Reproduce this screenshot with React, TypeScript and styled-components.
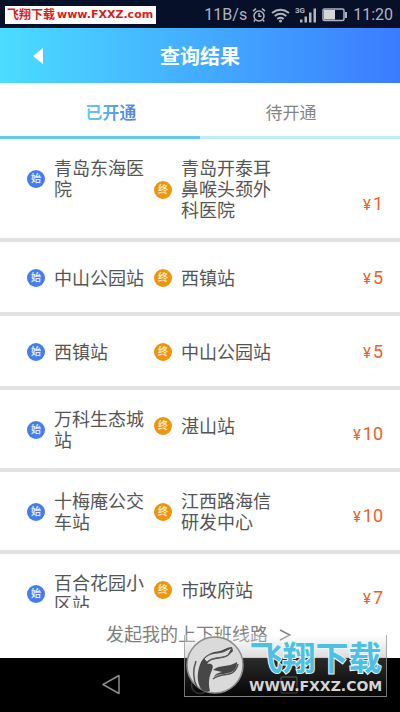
import React, { useState } from "react";
import styled, { createGlobalStyle } from "styled-components";

const sans = `Roboto, "Noto Sans CJK SC", sans-serif`;

const GlobalStyle = createGlobalStyle`
  * { box-sizing: border-box; }
  body { margin: 0; background: #fff; font-family: ${sans}; color: #555; }
  button { font: inherit; color: inherit; background: none; border: 0; padding: 0; cursor: pointer; }
`;

const Screen = styled.div`
  position: relative;
  display: flex;
  flex-direction: column;
  height: 100vh;
  overflow: hidden;
`;

const StatusBar = styled.div`
  display: flex;
  flex: none;
  align-items: center;
  justify-content: space-between;
  height: 28px;
  padding: 2px 7px 0 5px;
  background: #071029;
  color: #b0b4be;
  font-size: 16px;
  line-height: 20px;
`;

const SiteTag = styled.div`
  display: flex;
  align-items: center;
  gap: 2px;
  height: 18px;
  padding: 0 3px 0 2px;
  background: #fff;
  color: #dc1c1c;
  font-weight: 700;
  font-size: 12px;
  line-height: 18px;
  white-space: nowrap;
`;

const SiteTagUrl = styled.span`
  font-family: "DejaVu Sans", sans-serif;
  font-size: 11px;
`;

const StatusItems = styled.div`
  display: flex;
  align-items: center;
  gap: 5px;
`;

const Header = styled.header`
  display: grid;
  grid-template-columns: 76px 1fr 76px;
  flex: none;
  align-items: center;
  height: 55px;
  background: linear-gradient(90deg, #4bdcff, #3b7cff);
`;

const BackButton = styled.button`
  display: flex;
  justify-content: center;
`;

const Title = styled.h1`
  margin: 0;
  padding-top: 2px;
  color: #fff;
  font-size: 20px;
  font-weight: 700;
  line-height: 28px;
  text-align: center;
`;

const Tabs = styled.div`
  display: grid;
  grid-template-columns: 1fr 1fr;
  flex: none;
  height: 56px;
`;

const Tab = styled.button<{ $active: boolean }>`
  && { padding-top: 6px; }
  border-bottom: 3px solid ${(p) => (p.$active ? "#62cbe6" : "#bdedf5")};
  font-size: 17px;
  line-height: 24px;
  font-weight: ${(p) => (p.$active ? 700 : 400)};
  color: #858585;
  &:first-child { padding-left: 22px; }
  &:last-child { padding-right: 18px; }
`;

const TabLabel = styled.span<{ $active: boolean }>`
  ${(p) =>
    p.$active &&
    `background: linear-gradient(90deg, #66cdf0, #5580e2);
     background-clip: text;
     color: transparent;`}
`;

const RouteList = styled.ul`
  flex: 1;
  min-height: 0;
  margin: 0;
  padding: 0;
  overflow-y: auto;
  scrollbar-width: none;
  list-style: none;
`;

const RouteRow = styled.li`
  display: grid;
  grid-template-columns: 127px 1fr auto;
  padding: 19px 17px 17px 27px;
  border-bottom: 4px solid #e2e2e2;
`;

const Stop = styled.div`
  display: flex;
  align-items: center;
  align-self: start;
  gap: 9px;
  min-height: 34px;
`;

const StopBadge = styled.span<{ $kind: "start" | "end" }>`
  flex: none;
  width: 18px;
  height: 18px;
  border-radius: 50%;
  background: ${(p) => (p.$kind === "start" ? "#447df0" : "#ec960f")};
  color: ${(p) => (p.$kind === "start" ? "#dce8ff" : "#ffe7bd")};
  font-size: 10px;
  font-weight: 700;
  line-height: 18px;
  text-align: center;
`;

const StopName = styled.span`
  width: 90px;
  font-size: 18px;
  line-height: 21px;
`;

const Price = styled.div`
  display: flex;
  align-items: center;
  align-self: end;
  gap: 2px;
  height: 34px;
  color: #ee5f2a;
  font-size: 18px;
  line-height: 20px;
`;

const Currency = styled.span`
  padding-top: 2px;
  font-size: 15px;
`;

const CreateRoute = styled.button`
  && {
    display: flex;
    flex: none;
    align-items: center;
    justify-content: center;
    gap: 11px;
    height: 50px;
    padding: 4px 3px 0 0;
    background: #fff;
    color: #808080;
    font-size: 18px;
    line-height: 24px;
  }
`;

const NavBar = styled.nav`
  display: grid;
  grid-template-columns: repeat(3, 89px);
  flex: none;
  justify-content: center;
  align-items: center;
  height: 54px;
  background: #000;
`;

const NavButton = styled.button`
  display: flex;
  justify-content: center;
`;

const Watermark = styled.div`
  position: absolute;
  right: 13px;
  bottom: 15px;
  display: flex;
  align-items: center;
  gap: 4px;
  width: 203px;
  height: 62px;
  border: 1px solid rgba(150, 150, 150, 0.75);
  border-top: 0;
  background: linear-gradient(
    rgba(255, 255, 255, 0.3) 0,
    rgba(170, 170, 170, 0.4) 22px,
    rgba(70, 70, 70, 0.6) 24px,
    rgba(8, 8, 8, 0.75) 100%
  );
  pointer-events: none;
`;

const WatermarkText = styled.div`
  display: flex;
  flex-direction: column;
  align-items: center;
  padding-top: 3px;
  white-space: nowrap;
`;

const WatermarkName = styled.span`
  color: #4fbfe2;
  font-size: 33px;
  font-weight: 700;
  line-height: 37px;
  -webkit-text-stroke: 2px #e9f8fc;
  paint-order: stroke fill;
`;

const WatermarkUrl = styled.span`
  color: #d4d4d4;
  font-family: "DejaVu Sans", sans-serif;
  font-size: 14px;
  font-weight: 700;
  line-height: 18px;
`;

const AlarmIcon = () => (
  <svg width="14" height="16" viewBox="0 0 14 16" fill="none" stroke="currentColor" strokeWidth="1.5">
    <circle cx="7" cy="9" r="5" />
    <path d="M7 6v3.2h2.5M1 4.2l3-2.5M13 4.2l-3-2.5M3 13l-1.2 1.5M11 13l1.2 1.5" />
  </svg>
);

const WifiIcon = () => (
  <svg width="19" height="16" viewBox="0 0 19 16" fill="none" stroke="currentColor" strokeWidth="2">
    <path d="M1 6q8.500-6.500 17 0M3.700 9q5.800-4.500 11.600 0M6.300 12q3.200-2.500 6.400 0" />
    <circle cx="9.500" cy="14" r="1.500" fill="currentColor" stroke="none" />
  </svg>
);

const SignalIcon = () => (
  <svg width="22" height="18" viewBox="0 0 22 18" fill="currentColor">
    <text x="0" y="6.500" fontSize="8" fontWeight="700" fontFamily="Roboto">3G</text>
    <path d="M5 13.500h2.500v3H5zM9.500 10.500H12v6H9.500zM14 6.500h2.500v10H14zM18.500 2.500H21v14h-2.500z" />
  </svg>
);

const BatteryIcon = () => (
  <svg width="26" height="14" viewBox="0 0 26 14">
    <rect x="1" y="1" width="21" height="11.500" rx="1.500" fill="none" stroke="currentColor" strokeWidth="1.500" />
    <rect x="2" y="2" width="11" height="9.500" fill="#d5d6da" />
    <path d="M23 4h2v6h-2z" fill="currentColor" />
  </svg>
);

const EagleLogo = () => (
  <svg width="60" height="60" viewBox="0 0 60 60">
    <circle cx="30" cy="29" r="28" fill="#dadada" stroke="#8b8b8b" strokeWidth="1.500" />
    <path d="M17 54C11 47 12 35 16 26c5-8 11-10 19-11 4-1 7-4 12-4l1 4-5 5c-7 4-16 1-21 8 5-1 7 1 5 6-3 7-4 13-2 21-3 1-6 1-8-1z" fill="#474747" />
    <path d="M19 23c6-7 12-5 19-7 3-1 5-3 9-4l-4 7c-7 4-15 1-21 7z" fill="#dadada" stroke="#555" strokeWidth="1" />
    <path d="M28 34c7-6 15-2 24-8 0 6-3 10-9 11-6 2-9 0-14 4 1-3 4-4 8-5-3-1-6-1-9-2z" fill="#474747" />
    <path d="M11 25C8 33 8 43 12 51M28 43c7-6 13-3 19-6 3-2 5-5 6-9" fill="none" stroke="#555" strokeWidth="1.500" />
  </svg>
);

type Route = { from: string; to: string; price: number };

const routes: Route[] = [
  { from: "青岛东海医院", to: "青岛开泰耳鼻喉头颈外科医院", price: 1 },
  { from: "中山公园站", to: "西镇站", price: 5 },
  { from: "西镇站", to: "中山公园站", price: 5 },
  { from: "万科生态城站", to: "湛山站", price: 10 },
  { from: "十梅庵公交车站", to: "江西路海信研发中心", price: 10 },
  { from: "百合花园小区站", to: "市政府站", price: 7 },
];

const tabs = ["已开通", "待开通"];

export default function App() {
  const [active, setActive] = useState(0);
  return (
    <Screen>
      <GlobalStyle />
      <StatusBar>
        <SiteTag>
          飞翔下载 <SiteTagUrl>www.FXXZ.com</SiteTagUrl>
        </SiteTag>
        <StatusItems>
          <span>11B/s</span>
          <AlarmIcon />
          <WifiIcon />
          <SignalIcon />
          <BatteryIcon />
          <span>11:20</span>
        </StatusItems>
      </StatusBar>
      <Header>
        <BackButton aria-label="返回">
          <svg width="10" height="16" viewBox="0 0 10 16" fill="#fff">
            <path d="M10 0v16L0 8z" />
          </svg>
        </BackButton>
        <Title>查询结果</Title>
      </Header>
      <Tabs role="tablist">
        {tabs.map((label, i) => (
          <Tab key={label} role="tab" aria-selected={active === i} $active={active === i} onClick={() => setActive(i)}>
            <TabLabel $active={active === i}>{label}</TabLabel>
          </Tab>
        ))}
      </Tabs>
      <RouteList>
        {routes.map((r) => (
          <RouteRow key={r.from}>
            <Stop>
              <StopBadge $kind="start">始</StopBadge>
              <StopName>{r.from}</StopName>
            </Stop>
            <Stop>
              <StopBadge $kind="end">终</StopBadge>
              <StopName>{r.to}</StopName>
            </Stop>
            <Price>
              <Currency>¥</Currency>
              {r.price}
            </Price>
          </RouteRow>
        ))}
      </RouteList>
      <CreateRoute>
        <span>发起我的上下班线路</span>
        <svg width="12" height="12" viewBox="0 0 12 12" fill="none" stroke="currentColor" strokeWidth="1.500">
          <path d="M1 1l10 5-10 5" />
        </svg>
      </CreateRoute>
      <NavBar>
        <NavButton aria-label="后退">
          <svg width="20" height="22" viewBox="0 0 20 22" fill="none" stroke="#8a8a8a" strokeWidth="1.500">
            <path d="M18 1.500v18L2 10.500z" strokeLinejoin="round" />
          </svg>
        </NavButton>
        <NavButton aria-label="主页">
          <svg width="20" height="20" viewBox="0 0 20 20" fill="none" stroke="#8a8a8a" strokeWidth="1.500">
            <circle cx="10" cy="10" r="8.500" />
          </svg>
        </NavButton>
        <NavButton aria-label="最近任务">
          <svg width="18" height="18" viewBox="0 0 18 18" fill="none" stroke="#8a8a8a" strokeWidth="1.500">
            <rect x="1" y="1" width="16" height="16" rx="1" />
          </svg>
        </NavButton>
      </NavBar>
      <Watermark>
        <EagleLogo />
        <WatermarkText>
          <WatermarkName>飞翔下载</WatermarkName>
          <WatermarkUrl>WWW.FXXZ.COM</WatermarkUrl>
        </WatermarkText>
      </Watermark>
    </Screen>
  );
}
